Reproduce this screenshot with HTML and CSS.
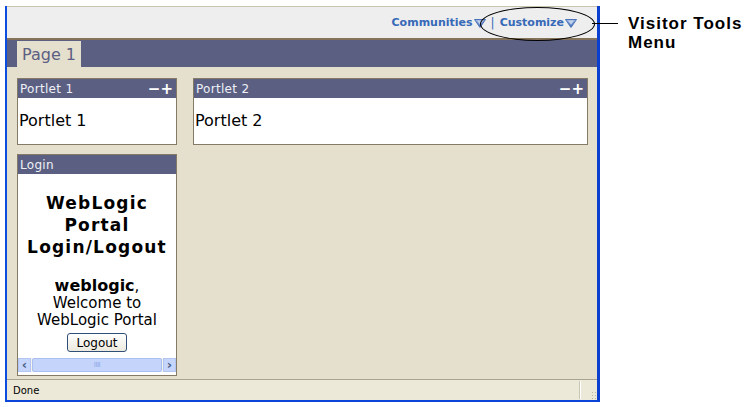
FILE: index.html
```html
<!DOCTYPE html>
<html>
<head>
<meta charset="utf-8">
<link rel="stylesheet" href="styles.css">
</head>
<body>
<div class="stage">
  <div class="window">
    <div class="header">
      <a class="vt-link">Communities<svg class="tri" width="12" height="9" viewBox="0 0 12 9"><defs><linearGradient id="g1" x1="0" y1="0" x2="0" y2="1"><stop offset="0" stop-color="#9fb6e0"/><stop offset="1" stop-color="#2f5fb0"/></linearGradient></defs><polygon points="0.5,0.5 11.5,0.5 6,8.5" fill="url(#g1)" stroke="#4a72b8" stroke-width="1"/><polygon points="3,1.5 9,1.5 6,6" fill="#dfe8f7" opacity="0.7"/></svg></a>
      <span class="sep">|</span>
      <a class="vt-link">Customize<svg class="tri" width="12" height="9" viewBox="0 0 12 9"><polygon points="0.5,0.5 11.5,0.5 6,8.5" fill="url(#g1)" stroke="#4a72b8" stroke-width="1"/><polygon points="3,1.5 9,1.5 6,6" fill="#dfe8f7" opacity="0.7"/></svg></a>
      <div class="ellipse"></div>
    </div>
    <div class="tabbar">
      <div class="tab">Page 1</div>
    </div>
    <div class="content">
      <div class="col">
        <div class="portlet p1">
          <div class="ptitle"><span>Portlet 1</span><span class="ctrl">−+</span></div>
          <div class="pbody">Portlet 1</div>
        </div>
        <div class="portlet login">
          <div class="ptitle"><span>Login</span></div>
          <div class="lbody">
            <div class="lhead">WebLogic<br>Portal<br>Login/Logout</div>
            <div class="welcome"><b>weblogic</b>,<br>Welcome to<br>WebLogic Portal</div>
            <button class="logout">Logout</button>
          </div>
          <div class="hscroll">
            <div class="sbtn">&lsaquo;</div>
            <div class="track"><div class="thumb"><span class="grip">IIII</span></div></div>
            <div class="sbtn">&rsaquo;</div>
          </div>
        </div>
      </div>
      <div class="col">
        <div class="portlet p2">
          <div class="ptitle"><span>Portlet 2</span><span class="ctrl">−+</span></div>
          <div class="pbody">Portlet 2</div>
        </div>
      </div>
    </div>
    <div class="status">
      <div class="stext">Done</div>
      <div class="scell"></div>
      <div class="sgrip"></div>
    </div>
  </div>
  <div class="annot">
    <div class="aline"></div>
    <div class="atext">Visitor Tools<br>Menu</div>
  </div>
</div>
</body>
</html>
```
FILE: styles.css
```css
html, body {
  margin: 0;
  padding: 0;
  background: #ffffff;
}
body {
  font-family: "DejaVu Sans", Verdana, sans-serif;
  width: 754px;
  height: 407px;
  overflow: hidden;
}
.stage {
  display: flex;
  align-items: flex-start;
  padding: 6px 0 0 5px;
}
.window {
  width: 590px;
  border-left: 2px solid #0b4ddf;
  border-right: 3px solid #0a3fd0;
  border-bottom: 2px solid #0b44d8;
  display: flex;
  flex-direction: column;
}
.header {
  position: relative;
  height: 31px;
  border-top: 1px solid #c8c2ae;
  background: #eeeeee;
  border-bottom: 2px solid #85735a;
  display: flex;
  align-items: center;
  justify-content: flex-end;
  padding-right: 20px;
  box-sizing: content-box;
  font-size: 11px;
  font-weight: bold;
  color: #3a6bb7;
}
.vt-link {
  display: flex;
  align-items: center;
  gap: 1px;
  color: #3669b8;
}
.tri {
  display: block;
  margin-top: 1px;
}
.sep {
  font-weight: normal;
  color: #3669b8;
  margin: 0 5px 0 5px;
  font-size: 12px;
}
.ellipse {
  position: absolute;
  left: 473px;
  top: 0px;
  width: 113px;
  height: 32px;
  border: 1px solid #000;
  border-radius: 50%;
}
.tabbar {
  height: 27px;
  background: #5b6083;
  padding-left: 10px;
  display: flex;
  align-items: flex-end;
}
.tab {
  width: 64px;
  height: 26px;
  background: #e5dfcd;
  color: #5b6083;
  font-size: 16px;
  line-height: 27px;
  text-align: center;
}
.content {
  background: #e5dfcd;
  height: 312px;
  padding: 11px 9px 0 10px;
  box-sizing: border-box;
  display: grid;
  grid-template-columns: 160px 395px;
  column-gap: 16px;
  align-items: start;
}
.col {
  display: flex;
  flex-direction: column;
  gap: 9px;
}
.portlet {
  border: 1px solid #857a66;
  background: #fff;
  display: flex;
  flex-direction: column;
}
.ptitle {
  height: 19px;
  background: #5b6083;
  color: #eef0f6;
  font-size: 12px;
  letter-spacing: 0.3px;
  display: flex;
  align-items: center;
  justify-content: space-between;
  padding: 0 3px 0 2px;
}
.ctrl {
  font-size: 15px;
  font-weight: bold;
  color: #fff;
  letter-spacing: 0;
}
.pbody {
  height: 46px;
  font-size: 16px;
  color: #000;
  display: flex;
  align-items: center;
  padding-left: 1px;
  padding-bottom: 1px;
  box-sizing: border-box;
}
.login {
  height: 222px;
  box-sizing: border-box;
}
.lbody {
  flex: 1;
  display: flex;
  flex-direction: column;
  align-items: center;
  text-align: center;
  color: #000;
}
.lhead {
  margin-top: 18px;
  font-weight: bold;
  font-size: 17px;
  line-height: 22px;
  letter-spacing: 1.2px;
}
.welcome {
  margin-top: 19px;
  font-size: 15px;
  line-height: 17px;
}
.welcome b {
  font-size: 16px;
}
.logout {
  margin-top: 4px;
  width: 60px;
  height: 19px;
  font-family: "DejaVu Sans", sans-serif;
  font-size: 12px;
  padding: 0;
  background: linear-gradient(#ffffff, #ece9de);
  border: 1px solid #2f4e78;
  border-radius: 3px;
  color: #000;
}
.hscroll {
  height: 14px;
  margin: 0 0 3px 0;
  display: flex;
  background: #f4f3ee;
}
.sbtn {
  width: 13px;
  height: 14px;
  background: #c5d5fb;
  border: 1px solid #b3c6f1;
  box-sizing: border-box;
  color: #4d6185;
  font-size: 13px;
  font-weight: bold;
  line-height: 11px;
  text-align: center;
}
.track {
  flex: 1;
  padding: 0 1px;
}
.thumb {
  height: 14px;
  background: #c4d4fb;
  border: 1px solid #a9bff0;
  border-radius: 2px;
  box-sizing: border-box;
  display: flex;
  align-items: center;
  justify-content: center;
}
.grip {
  font-size: 7px;
  color: #8ea8e8;
  letter-spacing: -0.5px;
}
.status {
  height: 21px;
  background: #ece9d8;
  border-top: 1px solid #a8a493;
  box-sizing: border-box;
  display: flex;
  align-items: center;
  font-family: "DejaVu Sans", sans-serif;
  font-size: 10px;
  color: #000;
}
.stext {
  flex: 1;
  padding-left: 6px;
}
.scell {
  width: 1px;
  height: 18px;
  background: #fff;
  border-left: 1px solid #c9c6b6;
  margin-right: 10px;
}
.sgrip {
  width: 6px;
  height: 8px;
  margin-top: 10px;
  background: radial-gradient(circle, #b8b4a2 0.8px, transparent 1px) 0 0 / 3px 3px;
}
.annot {
  position: relative;
  padding: 8px 0 0 28px;
}
.aline {
  position: absolute;
  left: -8px;
  top: 17px;
  width: 26px;
  height: 1px;
  background: #000;
}
.atext {
  font-family: "Liberation Sans", Arial, sans-serif;
  font-weight: bold;
  font-size: 17px;
  line-height: 19px;
  letter-spacing: 1px;
  color: #000;
}
```
